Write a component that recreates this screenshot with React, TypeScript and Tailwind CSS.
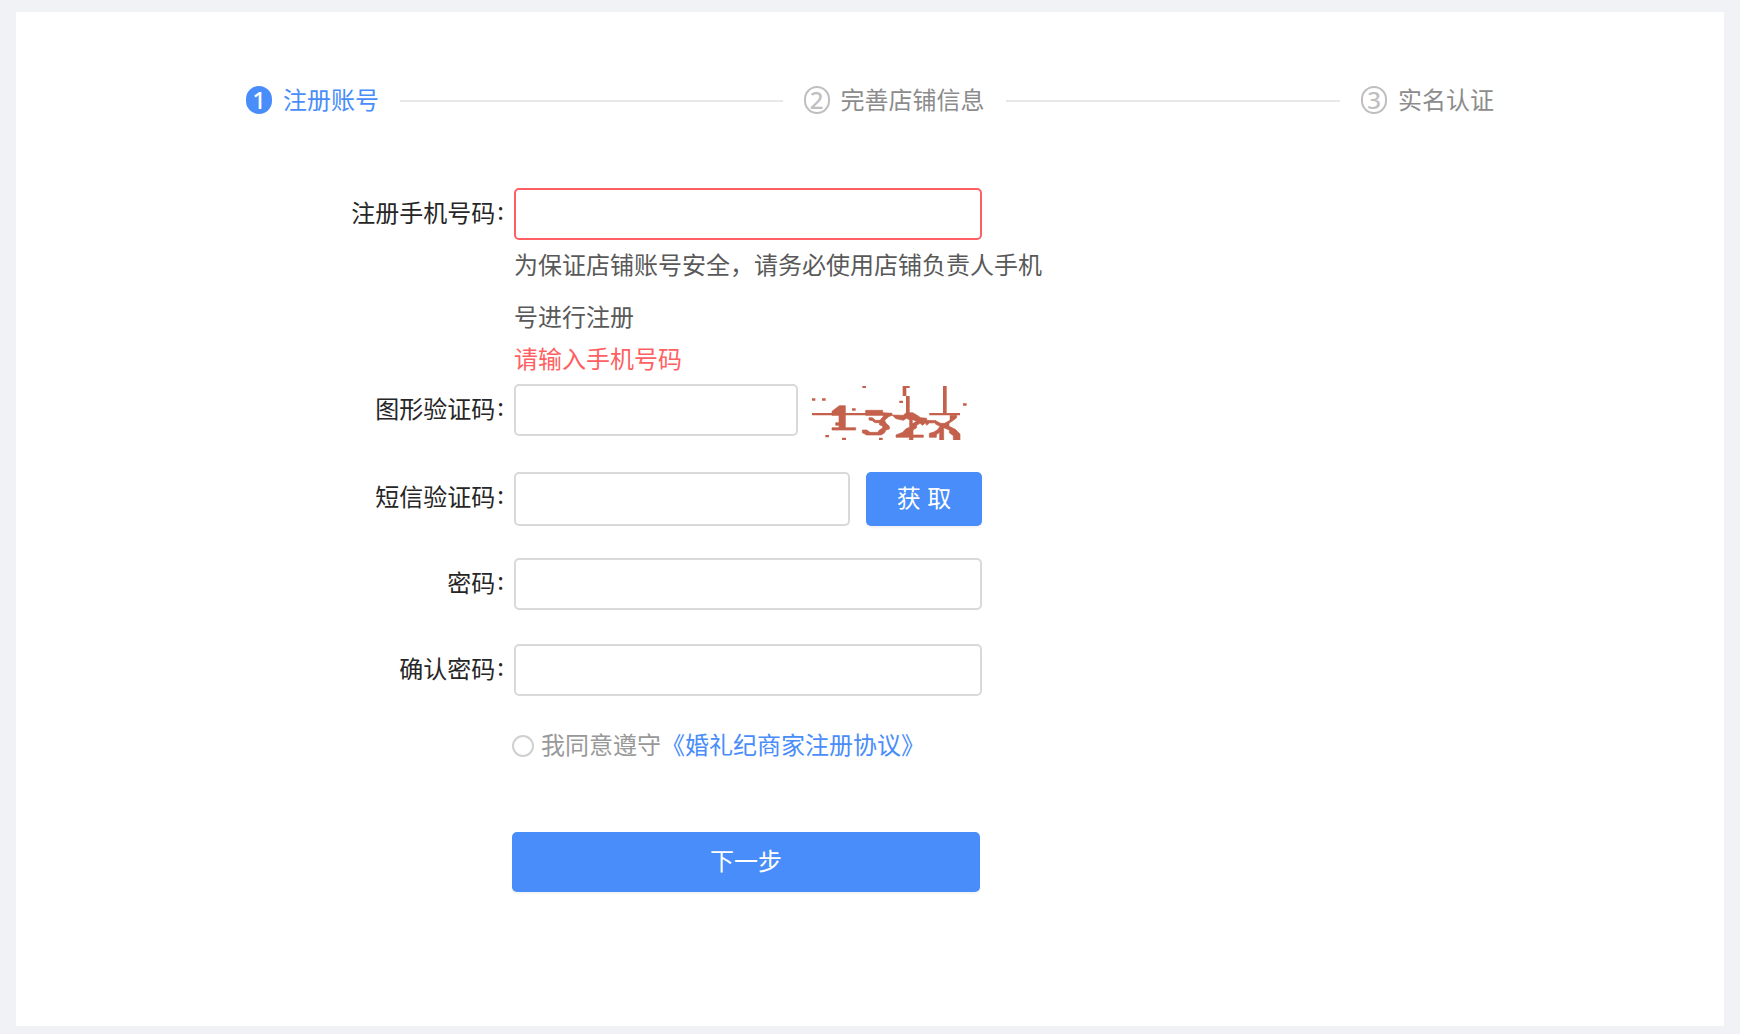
import { useState, FormEvent, ReactNode } from "react";

interface Step {
  no: number;
  title: string;
}

interface RowProps {
  id: string;
  label: string;
  children: ReactNode;
}

const steps: Step[] = [
  { no: 1, title: "注册账号" },
  { no: 2, title: "完善店铺信息" },
  { no: 3, title: "实名认证" },
];

const inputBase = "min-w-0 px-4 rounded-[5px] border-2 bg-white outline-none";
const buttonBase =
  "rounded-[5px] bg-[#488dfa] font-['Liberation_Sans','Noto_Sans_CJK_SC',sans-serif] text-white shadow-[0_2px_2px_rgba(0,0,0,0.05)]";

// 顶部步骤条
function Steps({ current }: { current: number }) {
  return (
    <ol className="flex">
      {steps.map((step, index) => {
        const active = step.no === current;
        const last = index === steps.length - 1;
        return (
          <li key={step.no} className={`flex items-center ${last ? "flex-none" : "flex-1"}`}>
            <span
              className={`flex h-7 w-[26px] items-center justify-center rounded-full border-2 font-['Noto_Sans',sans-serif] text-2xl leading-6 font-medium ${
                active ? "border-[#488dfa] bg-[#488dfa] text-white" : "border-[#bfbfbf] text-[#bfbfbf]"
              }`}
            >
              {step.no}
            </span>
            <span className={`ml-[11px] pb-0.5 whitespace-nowrap ${active ? "text-[#488dfa]" : "text-[#8c8c8c]"}`}>
              {step.title}
            </span>
            {!last && <span className="mx-[21px] mt-0.5 h-0.5 flex-1 bg-[#e8e8e8]" />}
          </li>
        );
      })}
    </ol>
  );
}

// 表单行：左侧标签 + 右侧控件
function Row({ id, label, children }: RowProps) {
  return (
    <div className="flex">
      <label htmlFor={id} className="flex h-12 w-[268px] flex-none items-center justify-end text-[#262626]">
        {label}
        <span className="ml-0.5 mr-2.5 pb-1">:</span>
      </label>
      <div className="min-w-0 flex-1">{children}</div>
    </div>
  );
}

// 图形验证码
function Captcha() {
  return (
    <svg viewBox="6 6 468 162" className="h-[54px] w-[156px]" fill="#c4614c" role="img" aria-label="图形验证码">
      {/* 干扰线 */}
      <path d="M6 87H246V94H6ZM358 87H450V94H358ZM399 6H410V90H399ZM278 6H299V12H289V36H278ZM288 36H299V90H288Z" />
      {/* 干扰点 */}
      <path d="M157 6H168V12H157ZM6 43H16V50H6ZM36 43H47V50H36ZM126 73H137V80H126ZM268 50H279V57H268ZM459 58H470V65H459ZM46 153H57V160H46ZM96 161H108V168H96ZM207 161H218V168H207Z" />
      {/* 字符 */}
      <g stroke="#c4614c" strokeWidth="2" strokeLinejoin="round">
        <path d="M88 65H106V131H137V138H66V131H87V124H77V116H87V94H66V82Z" />
        <path d="M167 79H218V86L246 88V94L236 98L224 109L228 118L238 127V135L228 138L223 147L213 153H170L157 146V138H170L180 145H204L208 138L218 132V126L208 122V116H195L187 110L177 108V101H187L196 109H210L220 97V94H167Z" />
        <path d="M246 93L280 94L288 86H308L320 93L332 101L350 103V109L378 110V116L358 117L350 124L346 116L338 124L330 118L320 124V131L309 138V153H340V160H309V168H298V160H258V153L278 145L288 134L299 130V108L290 103L280 109L258 104Z" />
        <path d="M376 110L392 118L404 118L420 109V94H440V101L430 109L417 118V127L436 136L450 150V168H430V155L418 146V138L401 131V168H389V145L379 152V160H358V148L370 145L382 138L390 127L376 120Z" />
      </g>
      <path d="M308 108L318 112L308 118ZM408 97H418V105L408 110Z" fill="#fff" />
    </svg>
  );
}

export default function Register() {
  const [phone, setPhone] = useState<string>("");
  const [agreed, setAgreed] = useState<boolean>(false);

  const handleSubmit = (e: FormEvent<HTMLFormElement>) => {
    e.preventDefault();
  };

  return (
    <div className="min-h-screen bg-[#f0f2f6] px-4 pt-3 pb-2 font-['Noto_Sans_CJK_SC',sans-serif] text-2xl leading-9">
      <main className="min-h-[1014px] bg-white px-8 pt-[69px] pb-16">
        <div className="mx-auto max-w-[1248px]">
          <Steps current={1} />

          <form onSubmit={handleSubmit} noValidate className="mt-[69px]">
            <Row id="phone" label="注册手机号码">
              <input
                id="phone"
                type="tel"
                value={phone}
                onChange={(e) => setPhone(e.target.value)}
                className={`${inputBase} block h-[52px] w-[468px] ${phone ? "border-[#d9d9d9]" : "border-[#ff5f62]"}`}
              />
              <div className="-mt-0.5 mb-0.5">
                <p className="max-w-[540px] leading-[52px] text-[#595959]">
                  为保证店铺账号安全，请务必使用店铺负责人手机号进行注册
                </p>
                <p className="h-10 leading-8 text-[#ff5f62]">{!phone && "请输入手机号码"}</p>
              </div>
            </Row>

            <div className="mb-8">
              <Row id="captcha" label="图形验证码">
                <div className="flex gap-3.5">
                  <input id="captcha" type="text" className={`${inputBase} h-[52px] w-[284px] border-[#d9d9d9]`} />
                  <button type="button" className="mt-0.5">
                    <Captcha />
                  </button>
                </div>
              </Row>
            </div>

            <div className="mb-8">
              <Row id="sms" label="短信验证码">
                <div className="flex gap-4">
                  <input id="sms" type="text" className={`${inputBase} h-[54px] w-[336px] border-[#d9d9d9]`} />
                  <button type="button" className={`${buttonBase} h-[54px] w-[116px]`}>
                    获 取
                  </button>
                </div>
              </Row>
            </div>

            <div className="grid gap-[34px]">
              <Row id="password" label="密码">
                <input
                  id="password"
                  type="password"
                  className={`${inputBase} block h-[52px] w-[468px] border-[#d9d9d9]`}
                />
              </Row>
              <Row id="confirm" label="确认密码">
                <input
                  id="confirm"
                  type="password"
                  className={`${inputBase} block h-[52px] w-[468px] border-[#d9d9d9]`}
                />
              </Row>
            </div>

            {/* 协议与提交 */}
            <div className="ml-[266px]">
              <div className="mt-[30px] flex items-center">
                <input
                  id="agree"
                  type="radio"
                  checked={agreed}
                  onChange={() => setAgreed(true)}
                  className="mt-0.5 mr-[7px] size-[22px] appearance-none rounded-full border-2 border-[#d0d0d0] checked:border-[6px] checked:border-[#488dfa]"
                />
                <label htmlFor="agree" className="pb-0.5 text-[#999]">
                  我同意遵守
                </label>
                <a href="#agreement" className="pb-0.5 text-[#488dfa]">
                  《婚礼纪商家注册协议》
                </a>
              </div>
              <button type="submit" className={`${buttonBase} mt-[68px] h-[60px] w-[468px]`}>
                下一步
              </button>
            </div>
          </form>
        </div>
      </main>
    </div>
  );
}
